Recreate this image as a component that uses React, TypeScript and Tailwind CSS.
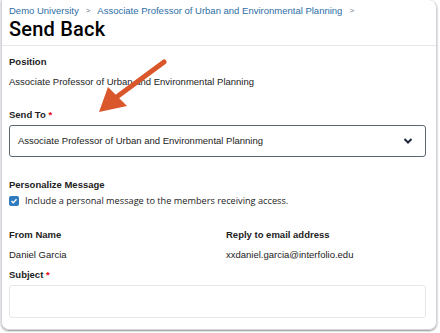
import React from "react";

function Chevron() {
    return (
        <svg width="10" height="8" viewBox="0 0 10 8" className="text-gray-800">
            <path d="M1.5 2 L5 5.5 L8.5 2" fill="none" stroke="currentColor" strokeWidth="2" />
        </svg>
    );
}

function Arrow() {
    return (
        <svg className="absolute left-[88px] top-[56px]" width="84" height="62" viewBox="0 0 84 62">
            <path d="M76 6 L30 40" stroke="#d9572b" strokeWidth="5" strokeLinecap="round" />
            <path d="M11 56 L20 31 L39 50 Z" fill="#d9572b" />
        </svg>
    );
}

export default function App() {
    return (
        <div className="w-[440px] h-[333px] bg-white relative overflow-hidden font-['Roboto',sans-serif]">
            <div className="ml-[1px] mr-[3px] h-[330px] border border-t-0 border-gray-300 rounded-tr-lg rounded-b-lg shadow-[0_1px_2px_rgba(0,0,0,0.45)] flex flex-col">
                <div className="px-[7px] pt-[4px]">
                    <div className="flex items-center text-[9.5px] text-[#2d6ea5] h-[14px] font-['Liberation_Sans',sans-serif]">
                        <span>Demo University</span>
                        <span className="mx-[7px] text-gray-500 text-[8px]">&gt;</span>
                        <span>Associate Professor of Urban and Environmental Planning</span>
                        <span className="ml-[7px] text-gray-500 text-[8px]">&gt;</span>
                    </div>
                    <h1 className="text-[20px] font-medium text-black leading-[22px] tracking-[0.2px]">Send Back</h1>
                </div>
                <div className="mt-[5px] border-t border-gray-200" />
                <div className="px-[7px] text-[9.5px] text-[#222] font-['Liberation_Sans',sans-serif]">
                    <div className="mt-[10px] font-bold leading-[12px]">Position</div>
                    <div className="mt-[8px] leading-[12px]">Associate Professor of Urban and Environmental Planning</div>
                    <div className="mt-[21px] font-bold leading-[12px]">Send To <span className="text-red-600">*</span></div>
                    <div className="mt-[4px] w-[417px] h-[32px] border border-[#5b6670] rounded-[3px] flex items-center justify-between pl-[8px] pr-[12px]">
                        <span>Associate Professor of Urban and Environmental Planning</span>
                        <Chevron />
                    </div>
                    <div className="mt-[22px] font-bold leading-[12px]">Personalize Message</div>
                    <div className="mt-[4px] flex items-center gap-[6px]">
                        <div className="w-[10px] h-[10px] rounded-[2px] bg-[#2f7bc0] flex items-center justify-center">
                            <svg width="8" height="8" viewBox="0 0 8 8">
                                <path d="M1.5 4 L3.3 5.8 L6.5 2.2" fill="none" stroke="white" strokeWidth="1.4" />
                            </svg>
                        </div>
                        <span className="font-['Open_Sans',sans-serif] text-[9.2px] leading-[12px]">Include a personal message to the members receiving access.</span>
                    </div>
                    <div className="mt-[22px] grid grid-cols-[217px_1fr] leading-[12px]">
                        <div className="font-bold">From Name</div>
                        <div className="font-bold">Reply to email address</div>
                        <div className="mt-[8px]">Daniel Garcia</div>
                        <div className="mt-[8px]">xxdaniel.garcia@interfolio.edu</div>
                    </div>
                    <div className="mt-[8px] font-bold leading-[12px]">Subject <span className="text-red-600">*</span></div>
                    <div className="mt-[4px] w-[417px] h-[33px] border border-gray-200 rounded-[3px]" />
                </div>
            </div>
            <Arrow />
        </div>
    );
}
